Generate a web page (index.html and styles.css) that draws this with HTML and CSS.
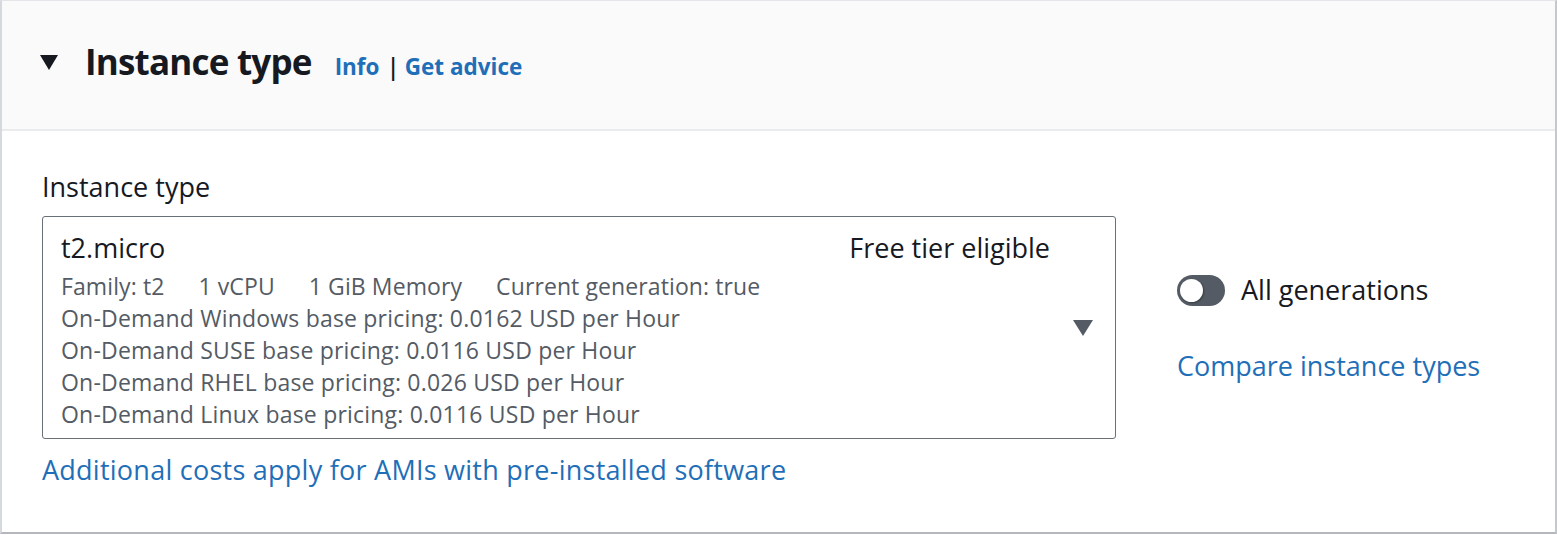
FILE: index.html
```html
<!DOCTYPE html>
<html>
<head>
<meta charset="utf-8">
<link rel="stylesheet" href="styles.css">
</head>
<body>
<div class="panel">
  <div class="panel-header">
    <svg class="caret" width="18" height="15" viewBox="0 0 18 15"><path d="M0 0 H18 L9 15 Z" fill="#16191f"/></svg>
    <h2 class="title">Instance type</h2>
    <a class="hlink">Info</a>
    <span class="sep">|</span>
    <a class="hlink">Get advice</a>
  </div>
  <div class="panel-body">
    <div class="label">Instance type</div>
    <div class="row">
      <div class="select">
        <div class="select-main">
          <div class="select-top">
            <span class="name">t2.micro</span>
            <span class="tag">Free tier eligible</span>
          </div>
          <div class="meta">
            <span>Family: t2</span><span>1 vCPU</span><span>1 GiB Memory</span><span>Current generation: true</span>
          </div>
          <div class="line">On-Demand Windows base pricing: 0.0162 USD per Hour</div>
          <div class="line">On-Demand SUSE base pricing: 0.0116 USD per Hour</div>
          <div class="line">On-Demand RHEL base pricing: 0.026 USD per Hour</div>
          <div class="line">On-Demand Linux base pricing: 0.0116 USD per Hour</div>
        </div>
        <svg class="dd" width="20" height="16" viewBox="0 0 20 16"><path d="M0 0 H20 L10 16 Z" fill="#545b64"/></svg>
      </div>
      <div class="side">
        <div class="toggle-row">
          <span class="toggle"><span class="knob"></span></span>
          <span class="toggle-label">All generations</span>
        </div>
        <a class="link compare">Compare instance types</a>
      </div>
    </div>
    <a class="link foot">Additional costs apply for AMIs with pre-installed software</a>
  </div>
</div>
</body>
</html>
```
FILE: styles.css
```css
html, body { margin: 0; padding: 0; background: #ffffff; }
body { font-family: "Open Sans", "Noto Sans", sans-serif; color: #16191f; }
.panel {
  width: 1557px;
  height: 534px;
  box-sizing: border-box;
  border-top: 1px solid #e3e5e8;
  border-left: 2px solid #d5d8dc;
  border-right: 2px solid #c4c7cb;
  border-bottom: 2px solid #b4b8bd;
  background: #fff;
}
.panel-header {
  height: 130px;
  box-sizing: border-box;
  background: #fafafa;
  border-bottom: 2px solid #e9ebed;
  display: flex;
  align-items: baseline;
  padding: 41px 0 0 38px;
}
.caret { margin-right: 27px; margin-top: 13px; align-self: flex-start; flex: none; }
.title { margin: 0; font-size: 35px; line-height: 40px; font-weight: 700; letter-spacing: -0.8px; margin-right: 23px; }
.hlink { color: #1f6fb8; font-weight: 700; font-size: 22.5px; }
.sep { font-size: 24px; font-weight: 600; margin: 0 5px 0 7px; }
.panel-body { padding: 40px 0 0 40px; }
.label { font-size: 27px; line-height: 32px; margin-bottom: 13px; }
.row { display: flex; align-items: flex-start; }
.select {
  width: 1074px;
  height: 223px;
  box-sizing: border-box;
  border: 1px solid #687078;
  border-radius: 3px;
  display: flex;
  align-items: center;
  padding: 0 22px 0 18px;
  flex: none;
}
.select-main { flex: 1; margin-right: 23px; padding-top: 6px; }
.select-top { display: flex; justify-content: space-between; font-size: 27px; line-height: 32px; margin-bottom: 6px; }
.meta { display: flex; gap: 34px; }
.meta, .line { font-size: 23px; line-height: 32px; color: #545b64; letter-spacing: 0.1px; }
.line { letter-spacing: 0.2px; }
.dd { flex: none; }
.side { margin-left: 61px; padding-top: 58px; display: flex; flex-direction: column; }
.toggle-row { display: flex; align-items: center; gap: 16px; height: 32px; }
.toggle { width: 48px; height: 31px; border-radius: 16px; background: #545b64; position: relative; display: inline-block; flex: none; }
.knob { position: absolute; left: 3px; top: 4px; width: 23px; height: 23px; border-radius: 50%; background: #fff; box-shadow: 1px 1px 2px rgba(0,0,0,0.35); }
.toggle-label { font-size: 27px; line-height: 32px; }
.link { color: #1f6fb8; font-size: 27px; line-height: 32px; }
.compare { margin-top: 44px; }
.foot { display: block; margin-top: 15px; letter-spacing: 0.25px; }
```
